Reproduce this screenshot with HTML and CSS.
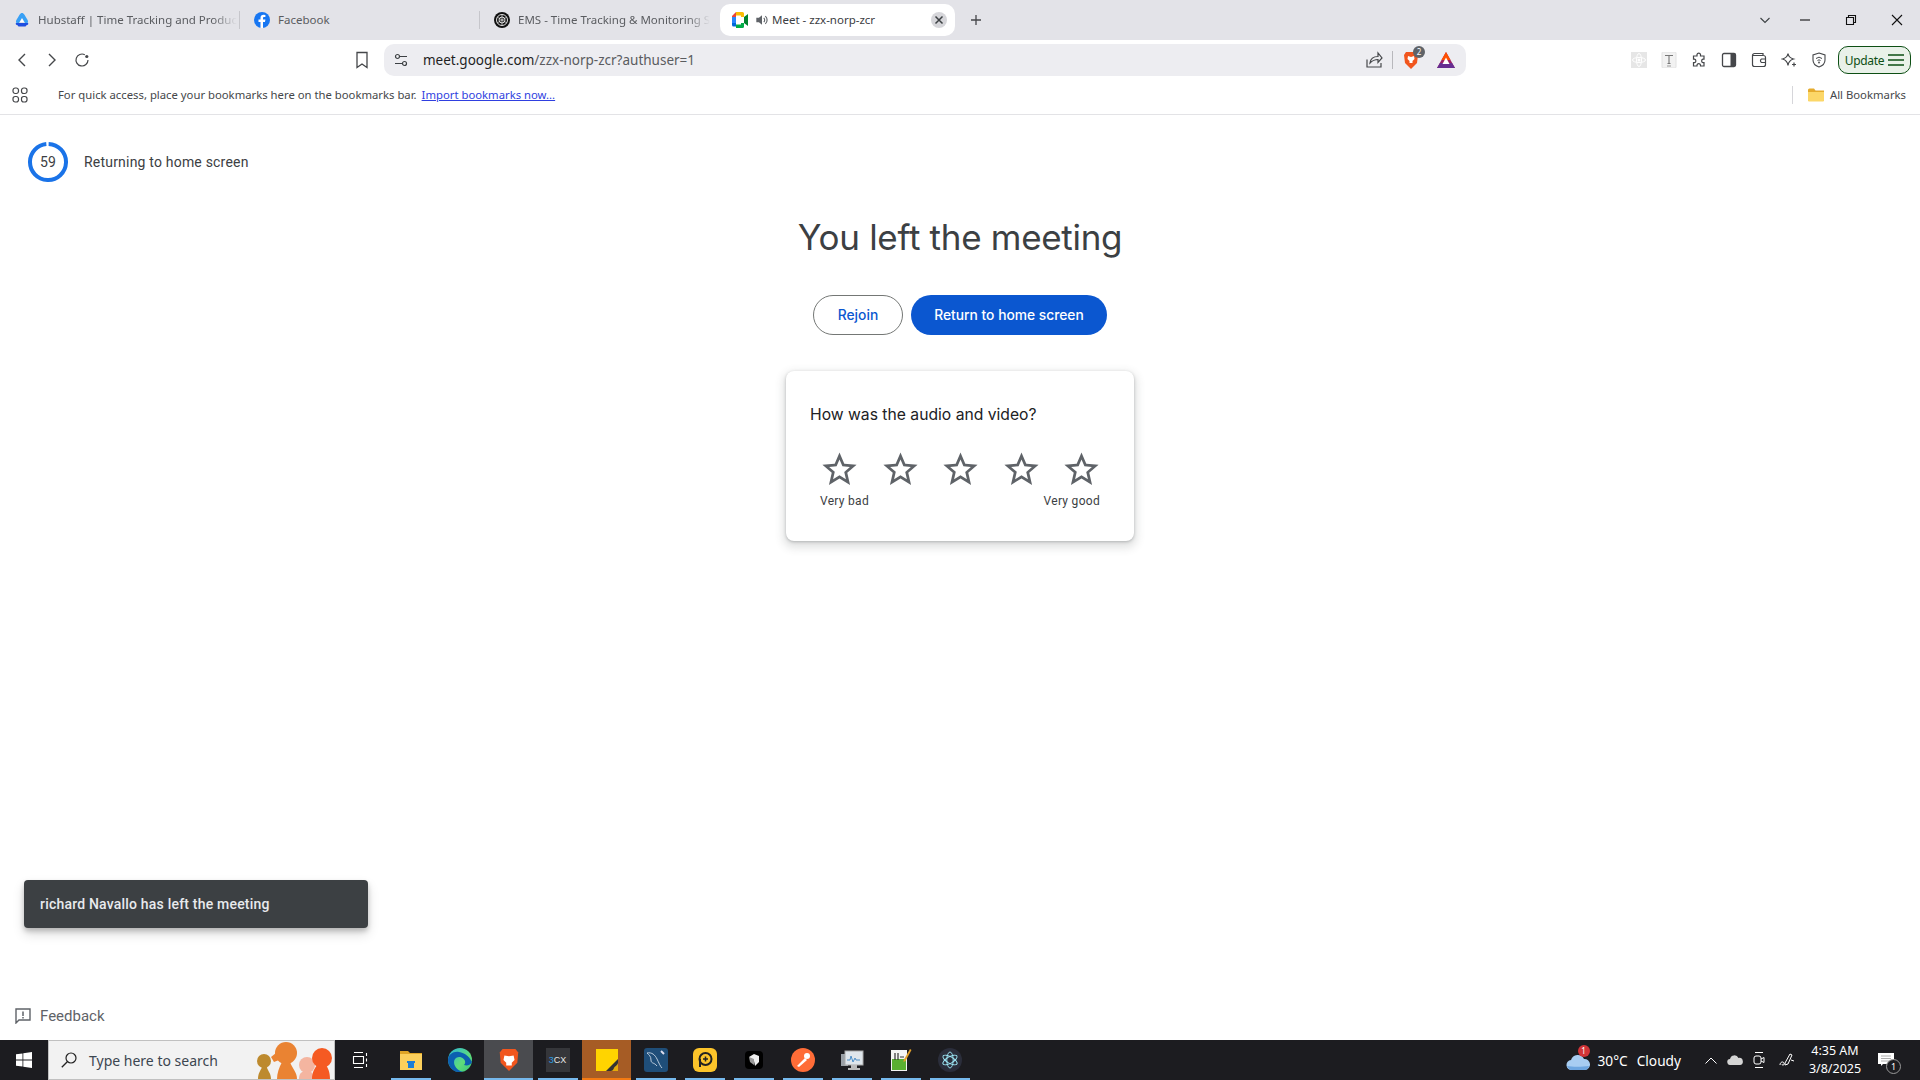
FILE: index.html
```html
<!DOCTYPE html>
<html lang="en">
<head>
    <meta charset="UTF-8">
    <title>Meet - zzx-norp-zcr</title>
    <link rel="stylesheet" href="styles.css">
</head>
<body>

    <!-- browser chrome -->
    <div class="tabstrip">
        <div class="tab sep">
            <svg class="fav" viewBox="0 0 16 16"><path d="M8 1c1 0 1.700.6 2.300 1.500l3 5c.6 1 1.200 2.500.2 3.500H11l-3-5-3 5H2.500c-1-1-.4-2.500.2-3.500l3-5C6.300 1.600 7 1 8 1z" fill="#38a0f5"/><path d="M2 11h12c1 1-.5 2-1.500 2.200l-1 1.300H4.500l-1-1.300C2.500 13 1 12 2 11z" fill="#1f4fe0"/><path d="M8 6.500L10 10H6z" fill="#fff"/></svg>
            <span class="tab-title fade">Hubstaff | Time Tracking and Produc</span>
        </div>
        <div class="tab sep">
            <svg class="fav" viewBox="0 0 16 16"><circle cx="8" cy="8" r="8" fill="#1877f2"/><path d="M9 16V10h2l.4-2.400H9V6.200c0-.8.300-1.200 1.200-1.200h1.200V3a9 9 0 0 0-1.800-.2C7.700 2.800 6.500 4 6.500 6v1.600H4.500V10h2v6z" fill="#fff"/></svg>
            <span class="tab-title">Facebook</span>
        </div>
        <div class="tab">
            <svg class="fav" viewBox="0 0 16 16"><circle cx="8" cy="8" r="8" fill="#111"/><circle cx="8" cy="8" r="5.500" fill="none" stroke="#ddd" stroke-width="1"/><circle cx="8" cy="8" r="3" fill="none" stroke="#ddd" stroke-width="1"/><path d="M3 5l10 6M3 11l10-6M8 2v12" stroke="#ddd" stroke-width=".7"/></svg>
            <span class="tab-title fade">EMS - Time Tracking &amp; Monitoring S</span>
        </div>
        <div class="tab active">
            <svg class="fav" viewBox="0 0 16 16"><path d="M0 4l4-4v5H0z" fill="#ea4335"/><path d="M4 0h6.500A1.500 1.500 0 0 1 12 1.500V5H9V3.500H4z" fill="#fbbc04"/><path d="M0 5h4v6H0z" fill="#2684fc"/><path d="M0 11h4v3.500H1.500A1.500 1.500 0 0 1 0 13z" fill="#0066da"/><path d="M4 12.500h5V11h3v3.500a1.500 1.500 0 0 1-1.500 1.500H4z" fill="#00ac47"/><path d="M12 5l4-3v12l-4-3z" fill="#00832d"/></svg>
            <svg class="speaker" viewBox="0 0 16 16"><path d="M1.500 5.500h3L8 2.500v11l-3.500-3h-3z" fill="#5f6368"/><path d="M10 5.500a3.500 3.500 0 0 1 0 5M11.800 3.500a6 6 0 0 1 0 9" fill="none" stroke="#5f6368" stroke-width="1.300"/></svg>
            <span class="tab-title active-title">Meet - zzx-norp-zcr</span>
            <span class="tab-close"><svg viewBox="0 0 10 10"><path d="M1.500 1.500l7 7M8.500 1.500l-7 7" stroke="#3c4043" stroke-width="1.500"/></svg></span>
        </div>
        <svg class="new-tab" viewBox="0 0 12 12"><path d="M6 1v10M1 6h10" stroke="#45474a" stroke-width="1.300"/></svg>
        <div class="window-btns">
            <svg viewBox="0 0 12 12"><path d="M1.500 4L6 8.500 10.500 4" fill="none" stroke="#3c4043" stroke-width="1.100"/></svg>
            <svg viewBox="0 0 12 12"><path d="M1 6h10" stroke="#111" stroke-width="1.100"/></svg>
            <svg viewBox="0 0 12 12"><path d="M1.500 3.500h7v7h-7zM3.500 3.500v-2h7v7h-2" fill="none" stroke="#111" stroke-width="1.100"/></svg>
            <svg viewBox="0 0 12 12"><path d="M1 1l10 10M11 1L1 11" stroke="#111" stroke-width="1.100"/></svg>
        </div>
    </div>

    <div class="toolbar">
        <svg class="nav-icon" viewBox="0 0 16 16"><path d="M11 2L5 8l6 6" fill="none" stroke="#45474a" stroke-width="1.400"/></svg>
        <svg class="nav-icon" viewBox="0 0 16 16"><path d="M5 2l6 6-6 6" fill="none" stroke="#45474a" stroke-width="1.400"/></svg>
        <svg class="nav-icon" viewBox="0 0 16 16"><path d="M14 8A6 6 0 1 1 10.800 2.700" fill="none" stroke="#45474a" stroke-width="1.200"/><circle cx="12.800" cy="4.500" r="1.600" fill="#45474a"/></svg>
        <svg class="bookmark-icon" viewBox="0 0 14 18"><path d="M2 1.500h10v15l-5-3.500-5 3.500z" fill="none" stroke="#45474a" stroke-width="1.300"/></svg>
        <div class="address">
            <svg class="tune" viewBox="0 0 14 14"><circle cx="3.500" cy="3.500" r="2" fill="none" stroke="#3c4043" stroke-width="1.200"/><circle cx="10.500" cy="10.500" r="2" fill="none" stroke="#3c4043" stroke-width="1.200"/><path d="M6 3.500h7M1 10.500h7" stroke="#3c4043" stroke-width="1.200"/></svg>
            <span class="url"><span class="url-host">meet.google.com</span>/zzx-norp-zcr?authuser=1</span>
            <svg class="share" viewBox="0 0 18 18"><path d="M2 8.500v7.500h14v-4M5 12c.5-4 3.500-6.500 8-6.500V2l4 5-4 4.500V8.500C9.500 8.500 7 10 5 12z" fill="none" stroke="#45474a" stroke-width="1.200"/></svg>
            <span class="addr-sep"></span>
            <span class="brave-wrap">
                <svg class="brave" viewBox="0 0 16 18"><path d="M3 1h10l2 3-1 8-6 6-6-6-1-8z" fill="#f1561e"/><path d="M5 5l3 1 3-1 .5 3-2 2v2H6.500v-2l-2-2z" fill="#fff"/></svg>
                <span class="brave-badge">2</span>
            </span>
            <svg class="bat" viewBox="0 0 18 16"><path d="M9 0l9 16H0z" fill="#9e1f63"/><path d="M9 0l4.500 8h-9z" fill="#ff5000"/><path d="M0 16l3-5h12l3 5z" fill="#662d91"/><path d="M9 5.500l3.500 6.500H5.500z" fill="#fff"/></svg>
        </div>
        <div class="ext-icons">
            <svg viewBox="0 0 16 16"><rect width="16" height="16" fill="#e6e6e6"/><circle cx="8" cy="8" r="1.500" fill="#fff"/><ellipse cx="8" cy="8" rx="6.500" ry="2.500" fill="none" stroke="#fff"/><ellipse cx="8" cy="8" rx="2.500" ry="6.500" fill="none" stroke="#fff"/></svg>
            <svg viewBox="0 0 16 16"><rect x="1" width="14" height="16" rx="1" fill="#f2f2f2" stroke="#e2e2e2"/><path d="M4 3.500h8M8 3.500v8M6.500 11.500h3" stroke="#777" stroke-width="1.100" fill="none"/><path d="M6 14h4" stroke="#999"/></svg>
            <svg viewBox="0 0 16 16"><path d="M6 2.500a1.800 1.800 0 0 1 3.500 0V4H13v3.200h-1a1.800 1.800 0 0 0 0 3.500h1V14H9.500v-1a1.800 1.800 0 0 0-3.500 0v1H2.500v-3.300h1a1.800 1.800 0 0 0 0-3.500h-1V4H6z" fill="none" stroke="#45474a" stroke-width="1.200"/></svg>
            <svg viewBox="0 0 16 16"><rect x="1.500" y="1.500" width="13" height="13" rx="1.500" fill="none" stroke="#45474a" stroke-width="1.300"/><rect x="9.500" y="2" width="5" height="12" fill="#45474a"/></svg>
            <svg viewBox="0 0 16 16"><path d="M12 3.500V1.500H3.500a2 2 0 0 0-2 2v9a2 2 0 0 0 2 2h9a2 2 0 0 0 2-2v-7a2 2 0 0 0-2-2H2" fill="none" stroke="#45474a" stroke-width="1.200"/><path d="M14 7h-3.500a2 2 0 0 0 0 3.500H14" fill="none" stroke="#45474a" stroke-width="1.200"/></svg>
            <svg viewBox="0 0 16 16"><path d="M7 1.500c.5 3 2 4.500 5.500 5.500-3.500 1-5 2.500-5.500 6.500C6.500 9.500 5 8 1.500 7 5 6 6.500 4.500 7 1.500z" fill="none" stroke="#45474a" stroke-width="1.200"/><path d="M13 10.500v4M11 12.500h4" stroke="#45474a" stroke-width="1.200"/></svg>
            <svg viewBox="0 0 16 16"><path d="M8 1l6 2v5c0 3.500-2.500 5.800-6 7-3.500-1.200-6-3.500-6-7V3z" fill="none" stroke="#45474a" stroke-width="1.100"/><path d="M5 6.500a4.500 4.500 0 0 1 6 0M6.500 8.500a2.200 2.200 0 0 1 3 0" fill="none" stroke="#45474a"/><circle cx="8" cy="10.500" r=".9" fill="#45474a"/></svg>
        </div>
        <div class="update">Update
            <svg viewBox="0 0 16 12"><path d="M0 1h16M0 6h16M0 11h16" stroke="#0d4f14" stroke-width="1.300"/></svg>
        </div>
    </div>

    <div class="bookmarks">
        <svg class="apps" viewBox="0 0 16 16"><g fill="none" stroke="#45474a" stroke-width="1.200"><rect x="1" y="1" width="5.500" height="5.500" rx="2.200"/><rect x="9.500" y="1" width="5.500" height="5.500" rx="2.200"/><rect x="1" y="9.500" width="5.500" height="5.500" rx="2.200"/><rect x="9.500" y="9.500" width="5.500" height="5.500" rx="2.200"/></g></svg>
        <span class="bm-text">For quick access, place your bookmarks here on the bookmarks bar.</span>
        <a class="bm-link" href="#">Import bookmarks now...</a>
        <span class="bm-sep"></span>
        <svg class="folder" viewBox="0 0 16 14"><path d="M0 2a1.500 1.500 0 0 1 1.500-1.500H6L7.500 2.500H16V13H0z" fill="#e5ab2d"/><path d="M0 4h16v8.500a1 1 0 0 1-1 1H1a1 1 0 0 1-1-1z" fill="#fcd768"/></svg>
        <span class="bm-text">All Bookmarks</span>
    </div>

    <!-- meet page -->
    <main class="page">
        <div class="countdown">
            <div class="ring">
                <svg viewBox="0 0 40 40"><circle cx="20" cy="20" r="18" fill="none" stroke="#1a73e8" stroke-width="4" stroke-dasharray="110 113.100" transform="rotate(-88 20 20)"/></svg>
                <span class="ring-num">59</span>
            </div>
            <span>Returning to home screen</span>
        </div>

        <h1>You left the meeting</h1>

        <div class="actions">
            <button class="btn btn-outline">Rejoin</button>
            <button class="btn btn-fill">Return to home screen</button>
        </div>

        <div class="card">
            <h2>How was the audio and video?</h2>
            <div class="stars">
                <svg viewBox="0 0 24 24"><path d="M22 9.240l-7.190-.62L12 2 9.190 8.630 2 9.240l5.460 4.730L5.820 21 12 17.270 18.180 21l-1.630-7.030L22 9.240zM12 15.400l-3.760 2.270 1-4.280-3.320-2.880 4.380-.38L12 6.100l1.710 4.040 4.380.38-3.320 2.880 1 4.280L12 15.400z"/></svg>
                <svg viewBox="0 0 24 24"><path d="M22 9.240l-7.190-.62L12 2 9.190 8.630 2 9.240l5.460 4.730L5.820 21 12 17.270 18.180 21l-1.630-7.030L22 9.240zM12 15.400l-3.760 2.270 1-4.280-3.320-2.880 4.380-.38L12 6.100l1.710 4.040 4.380.38-3.320 2.880 1 4.280L12 15.400z"/></svg>
                <svg viewBox="0 0 24 24"><path d="M22 9.240l-7.190-.62L12 2 9.190 8.630 2 9.240l5.460 4.730L5.820 21 12 17.270 18.180 21l-1.630-7.030L22 9.240zM12 15.400l-3.760 2.270 1-4.280-3.320-2.880 4.380-.38L12 6.100l1.710 4.040 4.380.38-3.320 2.880 1 4.280L12 15.400z"/></svg>
                <svg viewBox="0 0 24 24"><path d="M22 9.240l-7.190-.62L12 2 9.190 8.630 2 9.240l5.460 4.730L5.820 21 12 17.270 18.180 21l-1.630-7.030L22 9.240zM12 15.400l-3.760 2.270 1-4.280-3.320-2.880 4.380-.38L12 6.100l1.710 4.040 4.380.38-3.320 2.880 1 4.280L12 15.400z"/></svg>
                <svg viewBox="0 0 24 24"><path d="M22 9.240l-7.190-.62L12 2 9.190 8.630 2 9.240l5.460 4.730L5.820 21 12 17.270 18.180 21l-1.630-7.030L22 9.240zM12 15.400l-3.760 2.270 1-4.280-3.320-2.880 4.380-.38L12 6.100l1.710 4.040 4.380.38-3.320 2.880 1 4.280L12 15.400z"/></svg>
            </div>
            <div class="star-labels">
                <span>Very bad</span>
                <span>Very good</span>
            </div>
        </div>

        <div class="toast">richard Navallo has left the meeting</div>

        <div class="feedback">
            <svg viewBox="0 0 16 16"><path d="M1 1h14v11H4l-3 3z" fill="none" stroke="#5f6368" stroke-width="1.400"/><path d="M8 3.500v4.500M8 9v1.500" stroke="#5f6368" stroke-width="1.500"/></svg>
            <span>Feedback</span>
        </div>
    </main>

    <!-- windows taskbar -->
    <footer class="taskbar">
        <div class="start">
            <svg viewBox="0 0 16 16"><path d="M0 2.300l6.500-.9v6.200H0zM7.300 1.300L16 0v7.600H7.300zM0 8.400h6.500v6.200L0 13.700zM7.300 8.400H16V16l-8.700-1.200z" fill="#fff"/></svg>
        </div>
        <div class="search">
            <svg class="search-icon" viewBox="0 0 16 16"><circle cx="10" cy="6" r="5" fill="none" stroke="#222" stroke-width="1.200"/><path d="M6.300 9.700L.8 15.200" stroke="#222" stroke-width="1.300"/></svg>
            <span>Type here to search</span>
            <svg class="people" viewBox="0 0 78 38"><circle cx="8" cy="20" r="7" fill="#bd8a2e"/><path d="M2 38c0-6 3-9 4-12h5c0 3 4 6 4 12z" fill="#bd8a2e"/><circle cx="51" cy="24" r="8" fill="#f4b5a0"/><path d="M43 38c0-6 3-8 8-8s6 2 6 8z" fill="#f4b5a0"/><circle cx="30" cy="12" r="11" fill="#ea8332"/><path d="M15 16l5-4 3 7-5 2z" fill="#ea8332"/><path d="M21 38c0-6 2-11 5-17h8c2 6 7 10 7 17z" fill="#ea8332"/><circle cx="66" cy="17" r="10" fill="#f55a22"/><path d="M56 38c0-7 3-11 5-14h9c2 3 4 7 4 14z" fill="#f55a22"/></svg>
        </div>
        <div class="slot"><svg class="ic-16" viewBox="0 0 16 16"><path d="M2 .5h9M2 15.500h9M1.500 4.500h10v7h-10zM14.500 1v3M14.500 6.500v3M14.500 12v3" fill="none" stroke="#fff" stroke-width="1.100"/></svg></div>
        <div class="slot open first-app"><svg class="ic-24" viewBox="0 0 24 24"><path d="M1 3h8l2 2h12v3H1z" fill="#e0a526"/><rect x="1" y="6" width="22" height="16" fill="#fcd05c"/><path d="M8 13h8v2H8zM9 15h6v5H9z" fill="#1d7dd4"/></svg></div>
        <div class="slot"><svg class="ic-24" viewBox="0 0 24 24"><defs><linearGradient id="edge" x1="0" y1="0" x2="1" y2="1"><stop offset="0" stop-color="#2bb5dc"/><stop offset=".6" stop-color="#5fdc7a"/><stop offset="1" stop-color="#36c47a"/></linearGradient></defs><circle cx="12" cy="12" r="12" fill="url(#edge)"/><path d="M0 12C0 6 6 3 11 4c6 1 10 4 13 10-1 3-5 4-8 3 3-3 0-8-5-8-5 .5-6 5-4 9 1 2 4 5 8 6-9 2-15-5-15-12z" fill="#0c5fb0"/></svg></div>
        <div class="slot open brave-slot"><svg class="ic-24" viewBox="0 0 24 26"><path d="M5 1h14l3 4-1 11-9 9-9-9-1-11z" fill="#f1561e"/><path d="M7 8l5 1 5-1 1 5-3 3v3H9v-3l-3-3z" fill="#fff"/></svg></div>
        <div class="slot open"><span class="threecx"><b>3</b>CX</span></div>
        <div class="slot open sticky-slot"><svg class="ic-22" viewBox="0 0 22 22"><rect width="22" height="22" fill="#ffd400"/><path d="M22 10v12H10z" fill="#333"/><path d="M22 14v8h-8c3 0 3-1 4-3s3-2 4-5z" fill="#e5a90a"/></svg></div>
        <div class="slot open"><svg class="ic-24" viewBox="0 0 24 24"><rect width="24" height="24" rx="3" fill="#1f4e79"/><path d="M3 5c5-1 8 2 10 6s3 7 5 9M3 5c2 2 4 3 4 7s3 2 6 6" fill="none" stroke="#bcd" stroke-width="1"/><path d="M17 3l3 3" stroke="#dde" stroke-width="2"/></svg></div>
        <div class="slot open"><svg class="ic-24" viewBox="0 0 24 24"><rect width="24" height="24" rx="6" fill="#fcc42a"/><circle cx="12.500" cy="11" r="6" fill="none" stroke="#222" stroke-width="2"/><path d="M7 11v8" stroke="#222" stroke-width="2"/><path d="M12.500 8.500v5M10 11h5" stroke="#222" stroke-width="1.500"/></svg></div>
        <div class="slot open"><svg class="ic-24" viewBox="0 0 24 24"><rect x="3" y="3" width="18" height="18" rx="4" fill="#000"/><path d="M7 9l5-3 5 2v6l-4 4-1-5z" fill="#eee"/><path d="M7 9l5 2v6l-4-3z" fill="#999"/></svg></div>
        <div class="slot open"><svg class="ic-24" viewBox="0 0 24 24"><circle cx="12" cy="12" r="12" fill="#ff6c37"/><path d="M6 18l8-8 2 2-8 7z" fill="#fff"/><circle cx="16" cy="8" r="3" fill="#fff"/></svg></div>
        <div class="slot open"><svg class="ic-24" viewBox="0 0 24 24"><rect x="1" y="6" width="7" height="12" fill="#9aa0a6"/><rect x="5" y="3" width="18" height="14" fill="#dfe6ec" stroke="#aaa"/><path d="M7 12h3l1-4 2 6 2-4 1 2h4" fill="none" stroke="#4d8fc8"/><path d="M11 17h6v3h3v2H8v-2h3z" fill="#bbb"/></svg></div>
        <div class="slot open"><svg class="ic-24" viewBox="0 0 24 24"><rect x="2" y="2" width="16" height="21" fill="#f4f4f4"/><rect x="3" y="11" width="14" height="11" fill="#5ab031"/><path d="M6 5v7M9 5v7M11 9h4" stroke="#333" stroke-width="1.200"/><path d="M21 1l1.500 1-6 11-2 1 .2-2z" fill="#e3a029"/></svg></div>
        <div class="slot open"><svg class="ic-24" viewBox="0 0 24 24"><circle cx="12" cy="12" r="12" fill="#2b2e3b"/><g fill="none" stroke="#9feaf9" stroke-width=".9"><ellipse cx="12" cy="12" rx="8" ry="3.200" transform="rotate(30 12 12)"/><ellipse cx="12" cy="12" rx="8" ry="3.200" transform="rotate(90 12 12)"/><ellipse cx="12" cy="12" rx="8" ry="3.200" transform="rotate(150 12 12)"/></g></svg></div>

        <div class="tray">
            <span class="weather">
                <svg viewBox="0 0 24 22"><path d="M6 21a5 5 0 0 1-1-10 7 7 0 0 1 13-1 5.500 5.500 0 0 1 1 11z" fill="#a8cdf2"/><path d="M1 17c5 1 15 1 22 0-1 3-2 4-4 4H6c-3 0-4-2-5-4z" fill="#6ea6e0"/></svg>
                <span class="weather-badge">1</span>
            </span>
            <span class="temp">30°C</span>
            <span class="sky">Cloudy</span>
            <svg class="chev" viewBox="0 0 12 7"><path d="M.5 6.500L6 1l5.500 5.500" fill="none" stroke="#fff" stroke-width="1"/></svg>
            <svg class="tray-ic onedrive" viewBox="0 0 16 10"><path d="M3.500 10a3 3 0 0 1-.5-6 4.500 4.500 0 0 1 8.500-1A3.500 3.500 0 0 1 13 10z" fill="#d4d4d4"/></svg>
            <svg class="tray-ic meet-ic" viewBox="0 0 12 18"><path d="M2 1.500h8M2 16.500h8" stroke="#fff" fill="none"/><rect x="1" y="5" width="7" height="8" rx="2" fill="none" stroke="#fff"/><path d="M8 8l3-1.500v5L8 10" fill="none" stroke="#fff"/></svg>
            <svg class="tray-ic pen" viewBox="0 0 16 16"><path d="M6 11l5-9 2 1-4 9-3 1zM1 13c0-3 3-4 4-2s-2 3-2 1M12 8l3 1" fill="none" stroke="#fff"/></svg>
            <div class="clock">
                <span>4:35 AM</span>
                <span>3/8/2025</span>
            </div>
            <span class="notif">
                <svg viewBox="0 0 16 14"><path d="M0 0h16v11H5l-2 2v-2H0z" fill="#fff"/><path d="M3 3h10M3 5.500h10M3 8h10" stroke="#999" stroke-width=".8"/></svg>
                <span class="notif-count">1</span>
            </span>
        </div>
    </footer>

</body>
</html>
```

FILE: styles.css
```css
* {
    box-sizing: border-box;
}
body {
    margin: 0;
    width: 1920px;
    height: 1080px;
    display: flex;
    flex-direction: column;
    overflow: hidden;
    font-family: Roboto, "Liberation Sans", sans-serif;
    background-color: #ffffff;
    color: #3c4043;
}
svg {
    display: block;
    flex: none;
}

/* tabs */
.tabstrip {
    height: 40px;
    display: flex;
    align-items: center;
    background: #e3e3e8;
    font-family: "Noto Sans", sans-serif;
    font-size: 11.5px;
}
.tab {
    width: 240px;
    height: 32px;
    padding-left: 14px;
    display: flex;
    align-items: center;
    color: #5a5c60;
}
.tab.sep {
    border-right: 1px solid #c6c6cb;
    height: 18px;
}
.tab.active {
    width: 235px;
    padding: 0 8px 0 12px;
    background: #ffffff;
    border-radius: 10px;
    color: #3c4043;
}
.fav {
    width: 16px;
    height: 16px;
    margin-right: 8px;
}
.tab-title {
    white-space: nowrap;
    margin-top: -2px;
}
.fade {
    -webkit-mask-image: linear-gradient(to right, #000 88%, transparent 100%);
    mask-image: linear-gradient(to right, #000 88%, transparent 100%);
}
.active-title {
    flex: 1;
}
.speaker {
    width: 14px;
    height: 14px;
    margin-right: 3px;
    margin-left: -1px;
}
.tab-close {
    width: 16px;
    height: 16px;
    padding: 3px;
    border-radius: 50%;
    background: #d6d6da;
}
.new-tab {
    width: 12px;
    height: 12px;
    margin-left: 15px;
}
.window-btns {
    margin-left: auto;
    display: flex;
    align-items: center;
    gap: 34px;
    padding-right: 17px;
}
.window-btns svg {
    width: 12px;
    height: 12px;
}
.window-btns svg:first-child {
    margin-right: -6px;
}

/* toolbar */
.toolbar {
    height: 40px;
    display: flex;
    align-items: center;
    padding-left: 14px;
    gap: 14px;
}
.nav-icon {
    width: 16px;
    height: 16px;
}
.bookmark-icon {
    width: 14px;
    height: 18px;
    margin-left: 251px;
}
.address {
    width: 1082px;
    height: 32px;
    margin-left: 1px;
    padding: 0 11px 0 10px;
    display: flex;
    align-items: center;
    background: #ededf1;
    border-radius: 10px;
    font-family: "Noto Sans", sans-serif;
    font-size: 13.5px;
    color: #5a5c60;
}
.tune {
    width: 14px;
    height: 14px;
    margin-right: 15px;
}
.url {
    flex: 1;
}
.url-host {
    color: #1f1f1f;
}
.share {
    width: 18px;
    height: 18px;
}
.addr-sep {
    width: 1px;
    height: 18px;
    margin: 0 10px 0 9px;
    background: #b8b8bc;
}
.brave-wrap {
    position: relative;
    margin-right: 18px;
}
.brave {
    width: 16px;
    height: 18px;
}
.brave-badge {
    position: absolute;
    top: -5px;
    left: 10px;
    width: 12px;
    height: 12px;
    border-radius: 50%;
    background: #5f6368;
    color: #ffffff;
    font-size: 8px;
    line-height: 12px;
    text-align: center;
}
.bat {
    width: 18px;
    height: 16px;
}
.ext-icons {
    display: flex;
    align-items: center;
    gap: 14px;
    margin-left: 151px;
}
.ext-icons svg {
    width: 16px;
    height: 16px;
}
.update {
    width: 73px;
    height: 28px;
    margin-left: -3px;
    display: flex;
    align-items: center;
    justify-content: center;
    gap: 4px;
    background: #e9f1e9;
    border: 1px solid #0d4f14;
    border-radius: 10px;
    font-family: "Noto Sans", sans-serif;
    font-size: 12px;
    letter-spacing: -0.3px;
    color: #0d4f14;
}
.update svg {
    width: 16px;
    height: 12px;
}

/* bookmarks bar */
.bookmarks {
    height: 35px;
    display: flex;
    align-items: center;
    padding: 0 14px 5px 12px;
    border-bottom: 1px solid #e3e3e6;
    font-family: "Noto Sans", sans-serif;
    font-size: 11.3px;
    color: #45474a;
}
.apps {
    width: 16px;
    height: 16px;
    margin-right: 30px;
}
.bm-link {
    margin-left: 5px;
    color: #2f3fe0;
}
.bm-sep {
    width: 1px;
    height: 18px;
    margin-left: auto;
    margin-right: 15px;
    background: #d6d6da;
}
.folder {
    width: 16px;
    height: 14px;
    margin-right: 6px;
}

/* meet page */
.page {
    flex: 1;
    position: relative;
    display: flex;
    flex-direction: column;
    align-items: center;
    padding-top: 27px;
}
.countdown {
    align-self: flex-start;
    margin-left: 28px;
    display: flex;
    align-items: center;
    gap: 16px;
    font-size: 14px;
    letter-spacing: 0.2px;
    color: #3c4043;
}
.ring {
    display: grid;
    width: 40px;
    height: 40px;
}
.ring svg,
.ring-num {
    grid-area: 1 / 1;
}
.ring svg {
    width: 40px;
    height: 40px;
}
.ring-num {
    align-self: center;
    justify-self: center;
}
h1 {
    margin: 33px 0 0;
    font-family: Inter, sans-serif;
    font-size: 35px;
    line-height: 44px;
    font-weight: 400;
    letter-spacing: -0.3px;
    color: #3c4043;
}
.actions {
    display: flex;
    gap: 8px;
    margin-top: 36px;
}
.btn {
    height: 40px;
    border-radius: 20px;
    font-family: Inter, sans-serif;
    font-size: 13.8px;
    font-weight: 500;
}
.btn-outline {
    width: 90px;
    background: #ffffff;
    border: 1px solid #747775;
    color: #0b57d0;
}
.btn-fill {
    width: 196px;
    background: #0b57d0;
    border: none;
    color: #ffffff;
}
.card {
    width: 348px;
    height: 170px;
    margin-top: 36px;
    padding: 32px 23px 0 24px;
    background: #ffffff;
    border-radius: 8px;
    box-shadow: 0 1px 3px rgba(60, 64, 67, 0.3), 0 4px 8px 3px rgba(60, 64, 67, 0.15);
}
h2 {
    margin: 0;
    font-family: Inter, sans-serif;
    font-size: 15.7px;
    line-height: 24px;
    font-weight: 400;
    color: #202124;
}
.stars {
    display: flex;
    justify-content: space-between;
    margin: 22px 0 0 9px;
    width: 283px;
}
.stars svg {
    width: 41px;
    height: 41px;
    fill: #5f6368;
}
.star-labels {
    display: flex;
    justify-content: space-between;
    margin-top: 3px;
    padding: 0 11px 0 10px;
    font-size: 12px;
    line-height: 16px;
    letter-spacing: 0.3px;
    color: #3c4043;
}
.toast {
    position: absolute;
    left: 24px;
    top: 765px;
    width: 344px;
    height: 48px;
    padding-left: 16px;
    display: flex;
    align-items: center;
    background: #3c4043;
    border-radius: 4px;
    box-shadow: 0 3px 5px rgba(0, 0, 0, 0.2), 0 6px 12px rgba(0, 0, 0, 0.15);
    font-size: 14px;
    font-weight: 500;
    letter-spacing: 0.2px;
    color: #e8eaed;
}
.feedback {
    align-self: flex-start;
    margin-top: auto;
    margin-bottom: 15px;
    margin-left: 15px;
    display: flex;
    align-items: center;
    gap: 9px;
    font-size: 15px;
    color: #5f6368;
}
.feedback svg {
    width: 16px;
    height: 16px;
}

/* taskbar */
.taskbar {
    height: 40px;
    display: flex;
    align-items: center;
    background: #1c1c20;
}
.start {
    width: 48px;
    display: flex;
    justify-content: center;
}
.start svg {
    width: 16px;
    height: 16px;
}
.search {
    width: 287px;
    height: 40px;
    padding-left: 12px;
    display: flex;
    align-items: center;
    overflow: hidden;
    background: #f2f2f2;
    border: 1px solid #c0c0c0;
    font-family: "Noto Sans", sans-serif;
    font-size: 14px;
    color: #3c4650;
}
.search-icon {
    width: 16px;
    height: 16px;
    margin-right: 12px;
}
.people {
    width: 78px;
    height: 38px;
    margin-left: auto;
}
.slot {
    width: 49px;
    height: 40px;
    display: flex;
    align-items: center;
    justify-content: center;
}
.slot.open {
    background: linear-gradient(#76b9ed, #76b9ed) center bottom / 40px 2px no-repeat;
}
.first-app {
    margin-left: 2px;
}
.slot.brave-slot {
    background: linear-gradient(#76b9ed, #76b9ed) center bottom / 100% 2px no-repeat, #4a4b4f;
}
.slot.sticky-slot {
    background: linear-gradient(#f47a12, #f47a12) center bottom / 100% 2px no-repeat, #a65c25;
}
.ic-16 {
    width: 16px;
    height: 16px;
}
.ic-22 {
    width: 22px;
    height: 22px;
}
.ic-24 {
    width: 24px;
    height: 24px;
}
.threecx {
    width: 24px;
    height: 24px;
    background: #35363a;
    font-family: "Liberation Sans", sans-serif;
    font-size: 9px;
    line-height: 24px;
    text-align: center;
    color: #e8e8e8;
}
.threecx b {
    font-weight: 400;
    color: #2f9be0;
}
.tray {
    margin-left: auto;
    height: 40px;
    display: flex;
    align-items: center;
    padding-right: 26px;
    font-family: "Noto Sans", sans-serif;
    font-size: 13.7px;
    color: #ffffff;
}
.weather {
    position: relative;
    margin-right: 8px;
}
.weather svg {
    width: 24px;
    height: 22px;
}
.weather-badge {
    position: absolute;
    top: -4px;
    right: 0;
    width: 12px;
    height: 12px;
    border-radius: 50%;
    background: #d13438;
    font-size: 8px;
    line-height: 12px;
    text-align: center;
}
.sky {
    margin-left: 9px;
}
.chev {
    width: 12px;
    height: 7px;
    margin-left: 24px;
}
.tray-ic {
    margin-left: 10px;
}
.onedrive {
    width: 16px;
    height: 10px;
}
.meet-ic {
    width: 12px;
    height: 18px;
}
.pen {
    width: 16px;
    height: 16px;
    margin-left: 14px;
}
.clock {
    width: 60px;
    margin-left: 10px;
    display: flex;
    flex-direction: column;
    align-items: center;
    font-size: 12.5px;
    line-height: 18px;
}
.notif {
    position: relative;
    margin-left: 13px;
}
.notif svg {
    width: 16px;
    height: 14px;
}
.notif-count {
    position: absolute;
    top: 6px;
    left: 8px;
    width: 15px;
    height: 15px;
    border-radius: 50%;
    background: #1c1c20;
    border: 1px solid #999;
    font-size: 9px;
    line-height: 13px;
    text-align: center;
}
```
